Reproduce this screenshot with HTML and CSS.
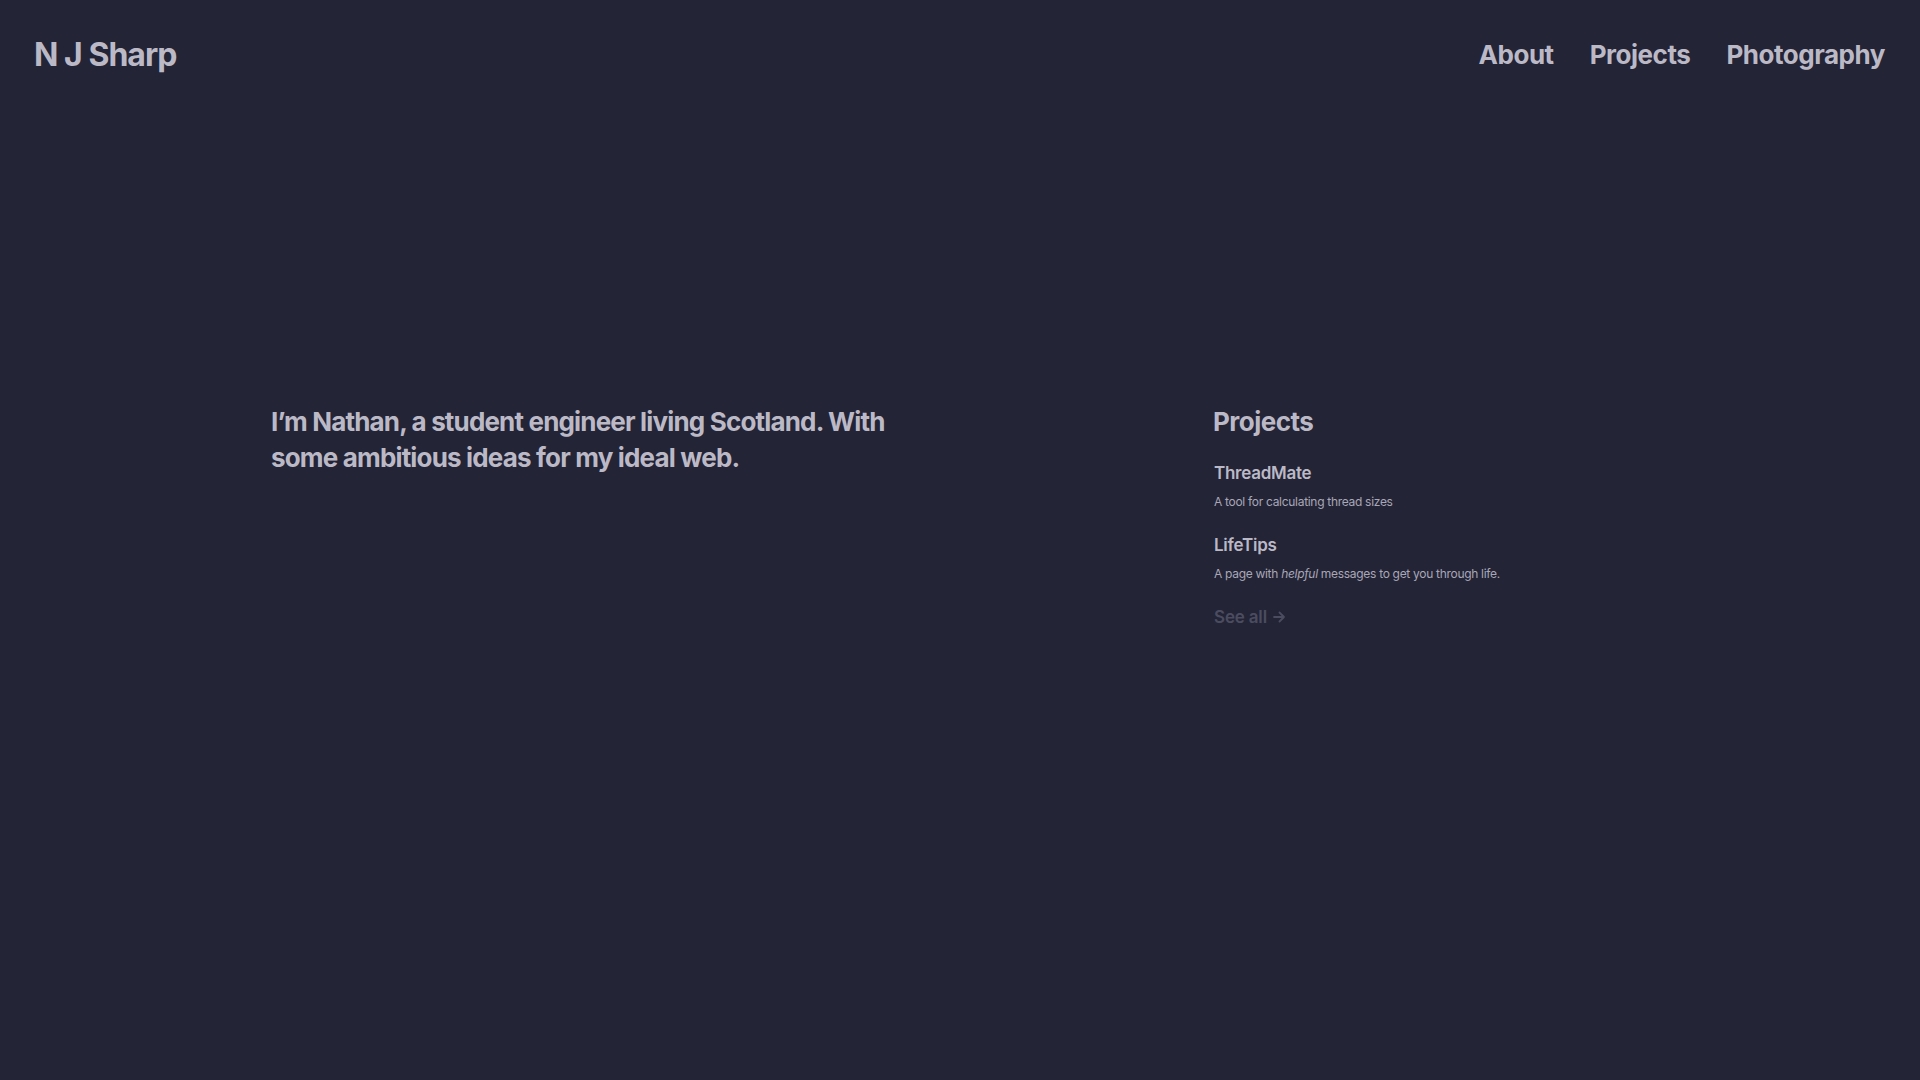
FILE: index.html
```html
<!DOCTYPE html>
<html lang="en">
<head>
<meta charset="utf-8">
<title>N J Sharp</title>
<link rel="stylesheet" href="styles.css">
</head>
<body>
<header class="site-header">
  <a class="logo" href="#">N J Sharp</a>
  <nav class="nav">
    <a href="#">About</a>
    <a href="#">Projects</a>
    <a href="#">Photography</a>
  </nav>
</header>
<main class="content">
  <section class="intro">
    <p>I’m Nathan, a student engineer living Scotland. With some ambitious ideas for my ideal web.</p>
  </section>
  <section class="projects">
    <h2>Projects</h2>
    <ul class="project-list">
      <li>
        <h3>ThreadMate</h3>
        <p>A tool for calculating thread sizes</p>
      </li>
      <li>
        <h3>LifeTips</h3>
        <p>A page with <em>helpful</em> messages to get you through life.</p>
      </li>
    </ul>
    <a class="see-all" href="#">See all <svg width="14" height="14" viewBox="0 0 14 14" fill="none" stroke="currentColor" stroke-width="1.8" stroke-linecap="round" stroke-linejoin="round"><path d="M2 7h10M7.5 2.5L12 7l-4.5 4.5"/></svg></a>
  </section>
</main>
</body>
</html>
```

FILE: styles.css
```css
* { box-sizing: border-box; }
html, body { margin: 0; padding: 0; }
body {
  background: #232436;
  color: #bcb9c7;
  font-family: Inter, "Noto Sans", sans-serif;
  min-height: 100vh;
}
a { color: inherit; text-decoration: none; }

.site-header {
  display: flex;
  justify-content: space-between;
  align-items: center;
  padding: 33px 35px 0 34px;
}
.logo {
  font-size: 32px;
  font-weight: 700;
  letter-spacing: -0.03em;
  line-height: 44px;
}
.nav {
  display: flex;
  gap: 36px;
}
.nav a {
  font-size: 26px;
  font-weight: 700;
  letter-spacing: -0.018em;
  line-height: 40px;
}

.content {
  display: grid;
  grid-template-columns: 942px 1fr;
  padding: 327px 0 0 271px;
}
.intro p {
  margin: 0;
  max-width: 640px;
  font-size: 26px;
  line-height: 36px;
  font-weight: 700;
  letter-spacing: -0.032em;
}
.projects h2 {
  margin: 0 0 20px 0;
  font-size: 26px;
  line-height: 36px;
  font-weight: 700;
  letter-spacing: -0.02em;
}
.project-list {
  list-style: none;
  margin: 0;
  padding: 0 0 0 1px;
}
.project-list li { margin-bottom: 21px; }
.project-list h3 {
  margin: 0;
  font-size: 17px;
  line-height: 26px;
  font-weight: 600;
  letter-spacing: -0.015em;
}
.project-list p {
  margin: 7px 0 0 0;
  font-size: 12px;
  line-height: 18px;
  color: #a9a7b7;
  letter-spacing: -0.025em;
}
.see-all {
  display: inline-flex;
  align-items: center;
  gap: 5px;
  margin: 3px 0 0 1px;
  font-size: 17px;
  font-weight: 600;
  letter-spacing: -0.01em;
  color: #4b4c60;
}
```
